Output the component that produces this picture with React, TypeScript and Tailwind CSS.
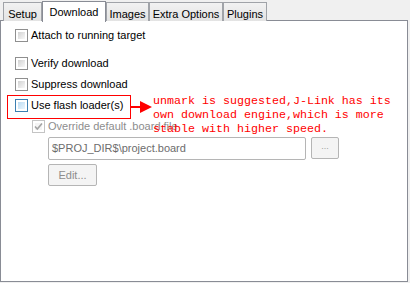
import React from 'react';

type BoxState = 'normal' | 'hover' | 'disabled';

const CheckBox: React.FC<{ state?: BoxState; checked?: boolean }> = ({ state = 'normal', checked = false }) => {
  const outer =
    state === 'hover'
      ? 'border-[#3c7fb1]'
      : state === 'disabled'
      ? 'border-[#c4c4c4]'
      : 'border-[#8f8f8f]';
  const inner =
    state === 'hover'
      ? 'bg-gradient-to-br from-[#bcdcf2] to-[#eaf5fd]'
      : state === 'disabled'
      ? 'bg-[#f4f4f4]'
      : 'bg-gradient-to-br from-[#d2d2d2] to-[#f8f8f8]';
  return (
    <div className={`relative w-[13px] h-[13px] shrink-0 border bg-white p-[2px] ${outer}`}>
      <div className={`w-full h-full ${inner}`} />
      {checked && (
        <svg className="absolute left-[1px] top-[1px]" width="9" height="9" viewBox="0 0 9 9">
          <path d="M1 4.5 L3.3 7 L8 1.5" fill="none" stroke="#a3a3a3" strokeWidth="1.6" />
        </svg>
      )}
    </div>
  );
};

const Option: React.FC<{ label: string; state?: BoxState; checked?: boolean; className?: string }> = ({
  label,
  state = 'normal',
  checked,
  className = '',
}) => (
  <div className={`flex items-center gap-[3px] h-[13px] ${className}`}>
    <CheckBox state={state} checked={checked} />
    <span className={state === 'disabled' ? 'text-[#8d8d8d]' : 'text-black'}>{label}</span>
  </div>
);

const tabs = ['Setup', 'Download', 'Images', 'Extra Options', 'Plugins'];
const tabWidths = ['w-[39px]', 'w-[64px]', 'w-[43px]', 'w-[74px]', 'w-[44px]'];

export default function App() {
  return (
    <div
      className="relative w-[410px] h-[283px] bg-[#f0f0f0] text-[11px] overflow-hidden"
      style={{ fontFamily: '"Liberation Sans", Arial, sans-serif' }}
    >
      {/* tab strip */}
      <div className="flex items-end h-[21px] pl-[3px] relative z-10">
        {tabs.map((t, i) =>
          t === 'Download' ? (
            <div
              key={t}
              className={`${tabWidths[i]} h-[21px] -mb-[1px] bg-white border border-b-0 border-[#898c95] flex justify-center pt-[2px]`}
            >
              {t}
            </div>
          ) : (
            <div
              key={t}
              className={`${tabWidths[i]} h-[19px] bg-gradient-to-b from-[#f2f2f2] to-[#e3e3e3] border border-b-0 border-[#a0a3a8] flex justify-center pt-[3px]`}
            >
              {t}
            </div>
          )
        )}
      </div>

      {/* panel */}
      <div className="w-[408px] h-[262px] -mt-[1px] bg-white border border-[#898c95] pl-[14px] pt-[8px]">
        <Option label="Attach to running target" />
        <Option label="Verify download" className="mt-[15px]" />
        <Option label="Suppress download" className="mt-[8px]" />
        <Option label="Use flash loader(s)" state="hover" className="mt-[8px]" />
        <div className="pl-[17px]">
          <Option label="Override default .board file" state="disabled" checked className="mt-[8px]" />
          <div className="flex gap-[5px] mt-[4px] ml-[16px]">
            <div className="w-[258px] h-[23px] border border-[#b5b5b5] rounded-[2px] flex items-center pl-[3px] text-[#6d6d6d]">
              $PROJ_DIR$\project.board
            </div>
            <div className="w-[28px] h-[22px] border border-[#b5b5b5] rounded-[2px] bg-[#f4f4f4] flex items-center justify-center text-[#a0a0a0] text-[9px] pb-[2px]">
              ...
            </div>
          </div>
          <div className="w-[49px] h-[22px] mt-[4px] ml-[16px] border border-[#b5b5b5] rounded-[2px] bg-[#f4f4f4] flex items-center justify-center text-[#8d8d8d]">
            Edit...
          </div>
        </div>
      </div>

      {/* annotation overlay */}
      <div className="absolute left-[7px] top-[95px] w-[124px] h-[24px] border border-[#ff0000]" />
      <div className="absolute left-[131px] top-[106px] w-[10px] h-[2px] bg-[#ff0000]" />
      <svg className="absolute left-[140px] top-[101px]" width="13" height="12" viewBox="0 0 13 12">
        <polygon points="0,0 12,6 0,12" fill="#ff0000" />
      </svg>
      <div
        className="absolute left-[153px] top-[94px] text-[#ff0000] text-[11.67px] leading-[14px] whitespace-pre"
        style={{ fontFamily: '"Liberation Mono", "Courier New", monospace' }}
      >
        {'unmark is suggested,J-Link has its\nown download engine,which is more\nstable with higher speed.'}
      </div>
    </div>
  );
}
